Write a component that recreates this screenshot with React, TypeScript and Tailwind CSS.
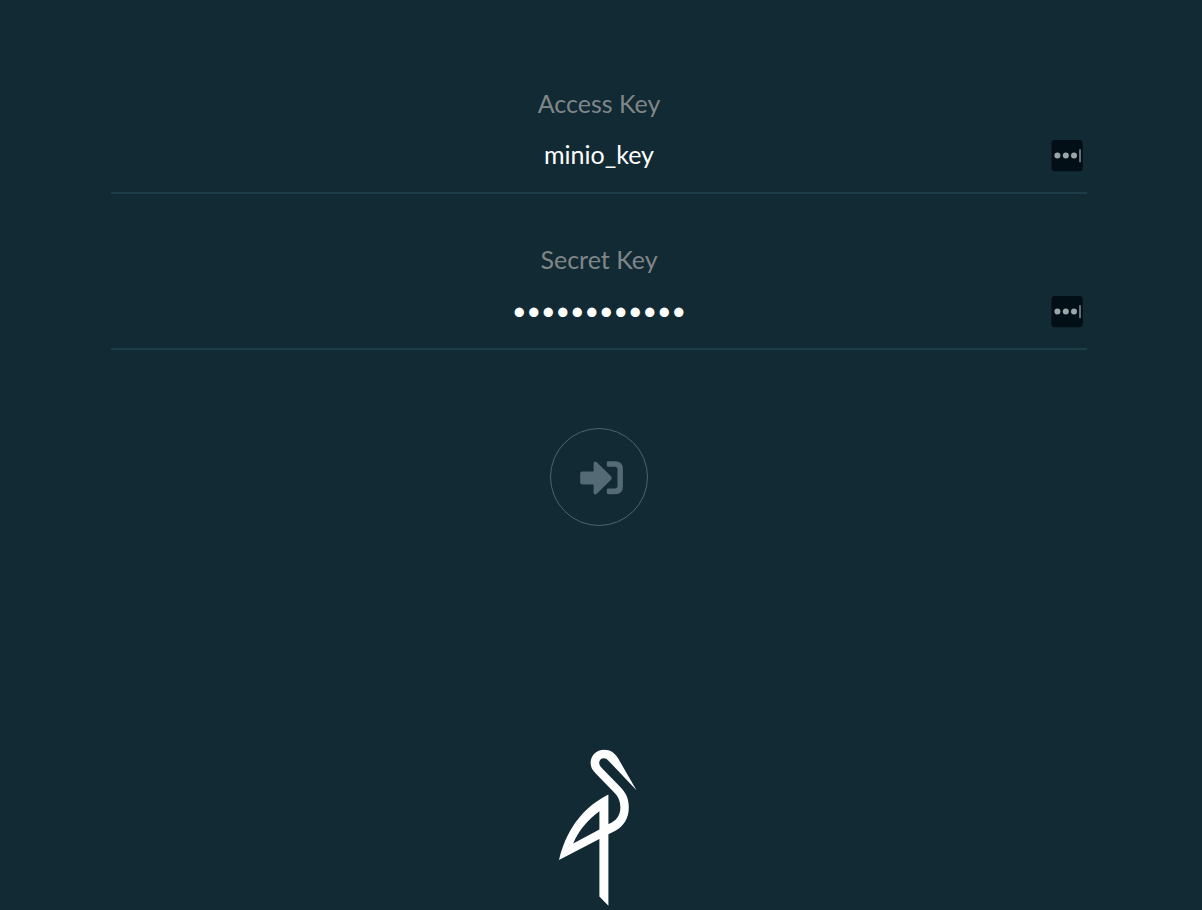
import { useState } from 'react'

type FieldProps = {
  id: string
  label: string
  type: 'text' | 'password'
  initial: string
}

function KeyFillIcon() {
  return (
    <svg className="block size-8" viewBox="0 0 32 32" aria-hidden="true">
      <rect x="0.5" y="0" width="31.2" height="31.2" rx="3.5" fill="#020f16" />
      <circle cx="6.4" cy="15.6" r="3" fill="#9aa6aa" />
      <circle cx="14.8" cy="15.6" r="3" fill="#9aa6aa" />
      <circle cx="23" cy="15.6" r="3" fill="#9aa6aa" />
      <rect x="28.2" y="9.2" width="1.6" height="13" fill="#7b888e" />
    </svg>
  )
}

function Field({ id, label, type, initial }: FieldProps) {
  const [value, setValue] = useState(initial)
  return (
    <div className="flex flex-col border-b-2 border-[#1d3e49]">
      <label htmlFor={id} className="text-center text-[25px] leading-8 text-[#808688]">
        {label}
      </label>
      <div className="relative mt-[13px] mb-3">
        <input
          id={id}
          type={type}
          value={value}
          onChange={(e) => setValue(e.target.value)}
          className="block h-12 w-full bg-transparent pb-1 text-center text-[25px] text-white outline-none"
        />
        <button
          type="button"
          aria-label={`Fill ${label}`}
          className="absolute top-2 right-1"
        >
          <KeyFillIcon />
        </button>
      </div>
    </div>
  )
}

function SignInIcon() {
  return (
    <svg className="block h-9 w-11" viewBox="579 459 44 36" aria-hidden="true">
      <path
        d="M582 471.6H593.6V463.4C593.6 461.4 595.5 460.8 596.8 462.2L611 476.3Q612.3 478 611 479.7L596.8 493.8C595.5 495.2 593.6 494.6 593.6 492.6V484.4H582Q580.2 484.4 580.2 482.6V473.4Q580.2 471.6 582 471.6Z"
        fill="#546a75"
      />
      <path
        d="M608.2 461.2H615.2Q622.9 461.2 622.9 469V486.4Q622.9 494.2 615.2 494.2H608.2Q606.8 494.2 606.8 492.8V490Q606.8 488.6 608.2 488.6H614.5Q617.5 488.6 617.5 485.6V469.8Q617.5 466.8 614.5 466.8H608.2Q606.8 466.8 606.8 465.4V462.6Q606.8 461.2 608.2 461.2Z"
        fill="#546a75"
      />
    </svg>
  )
}

function StorkLogo() {
  return (
    <svg className="block h-40 w-20" viewBox="559 748 80 160" role="img" aria-label="MinIO">
      <path
        fillRule="evenodd"
        fill="#ffffff"
        d="M636.5 790.2L618.5 759C615 753 610.5 749.8 604 749.8C596.5 749.8 590.6 755.5 590.6 763C590.6 767 592.3 770 595.5 773.3L614.7 793C618.5 797 620.4 801.5 620.4 807.5C620.4 816 615.5 821.5 608.4 824V794.6C588.5 804.5 567.5 824 559 860L599.4 839V896.6L608.4 905.8V834.3L614.5 831.2C624 826.3 628.8 818 628.8 807.5C628.8 799.5 626.3 793.3 620.8 787.6L601.8 768C599.9 766 599.2 764.6 599.2 762.8C599.2 760.2 601.2 758.2 603.8 758.2C605.5 758.2 606.8 758.9 608.2 760.4ZM599.4 811.2V829.4L573.2 843.4C578.5 830.5 588 819.5 599.4 811.2Z"
      />
    </svg>
  )
}

export default function App() {
  return (
    <main className="flex min-h-screen flex-col bg-[#112a34] pt-[87px] pr-[115px] pl-[111px] font-['Lato',sans-serif]">
      <form className="flex flex-col" onSubmit={(e) => e.preventDefault()}>
        <div className="flex flex-col gap-[49px]">
          <Field id="access-key" label="Access Key" type="text" initial="minio_key" />
          <Field id="secret-key" label="Secret Key" type="password" initial="minio_secret" />
        </div>
        <button
          type="submit"
          aria-label="Sign in"
          className="mt-[78px] flex size-[98px] items-center justify-center self-center rounded-full border border-[#4d646f] pl-1"
        >
          <SignInIcon />
        </button>
      </form>
      <footer className="mt-auto flex justify-center pt-10 pb-[2px]">
        <StorkLogo />
      </footer>
    </main>
  )
}
